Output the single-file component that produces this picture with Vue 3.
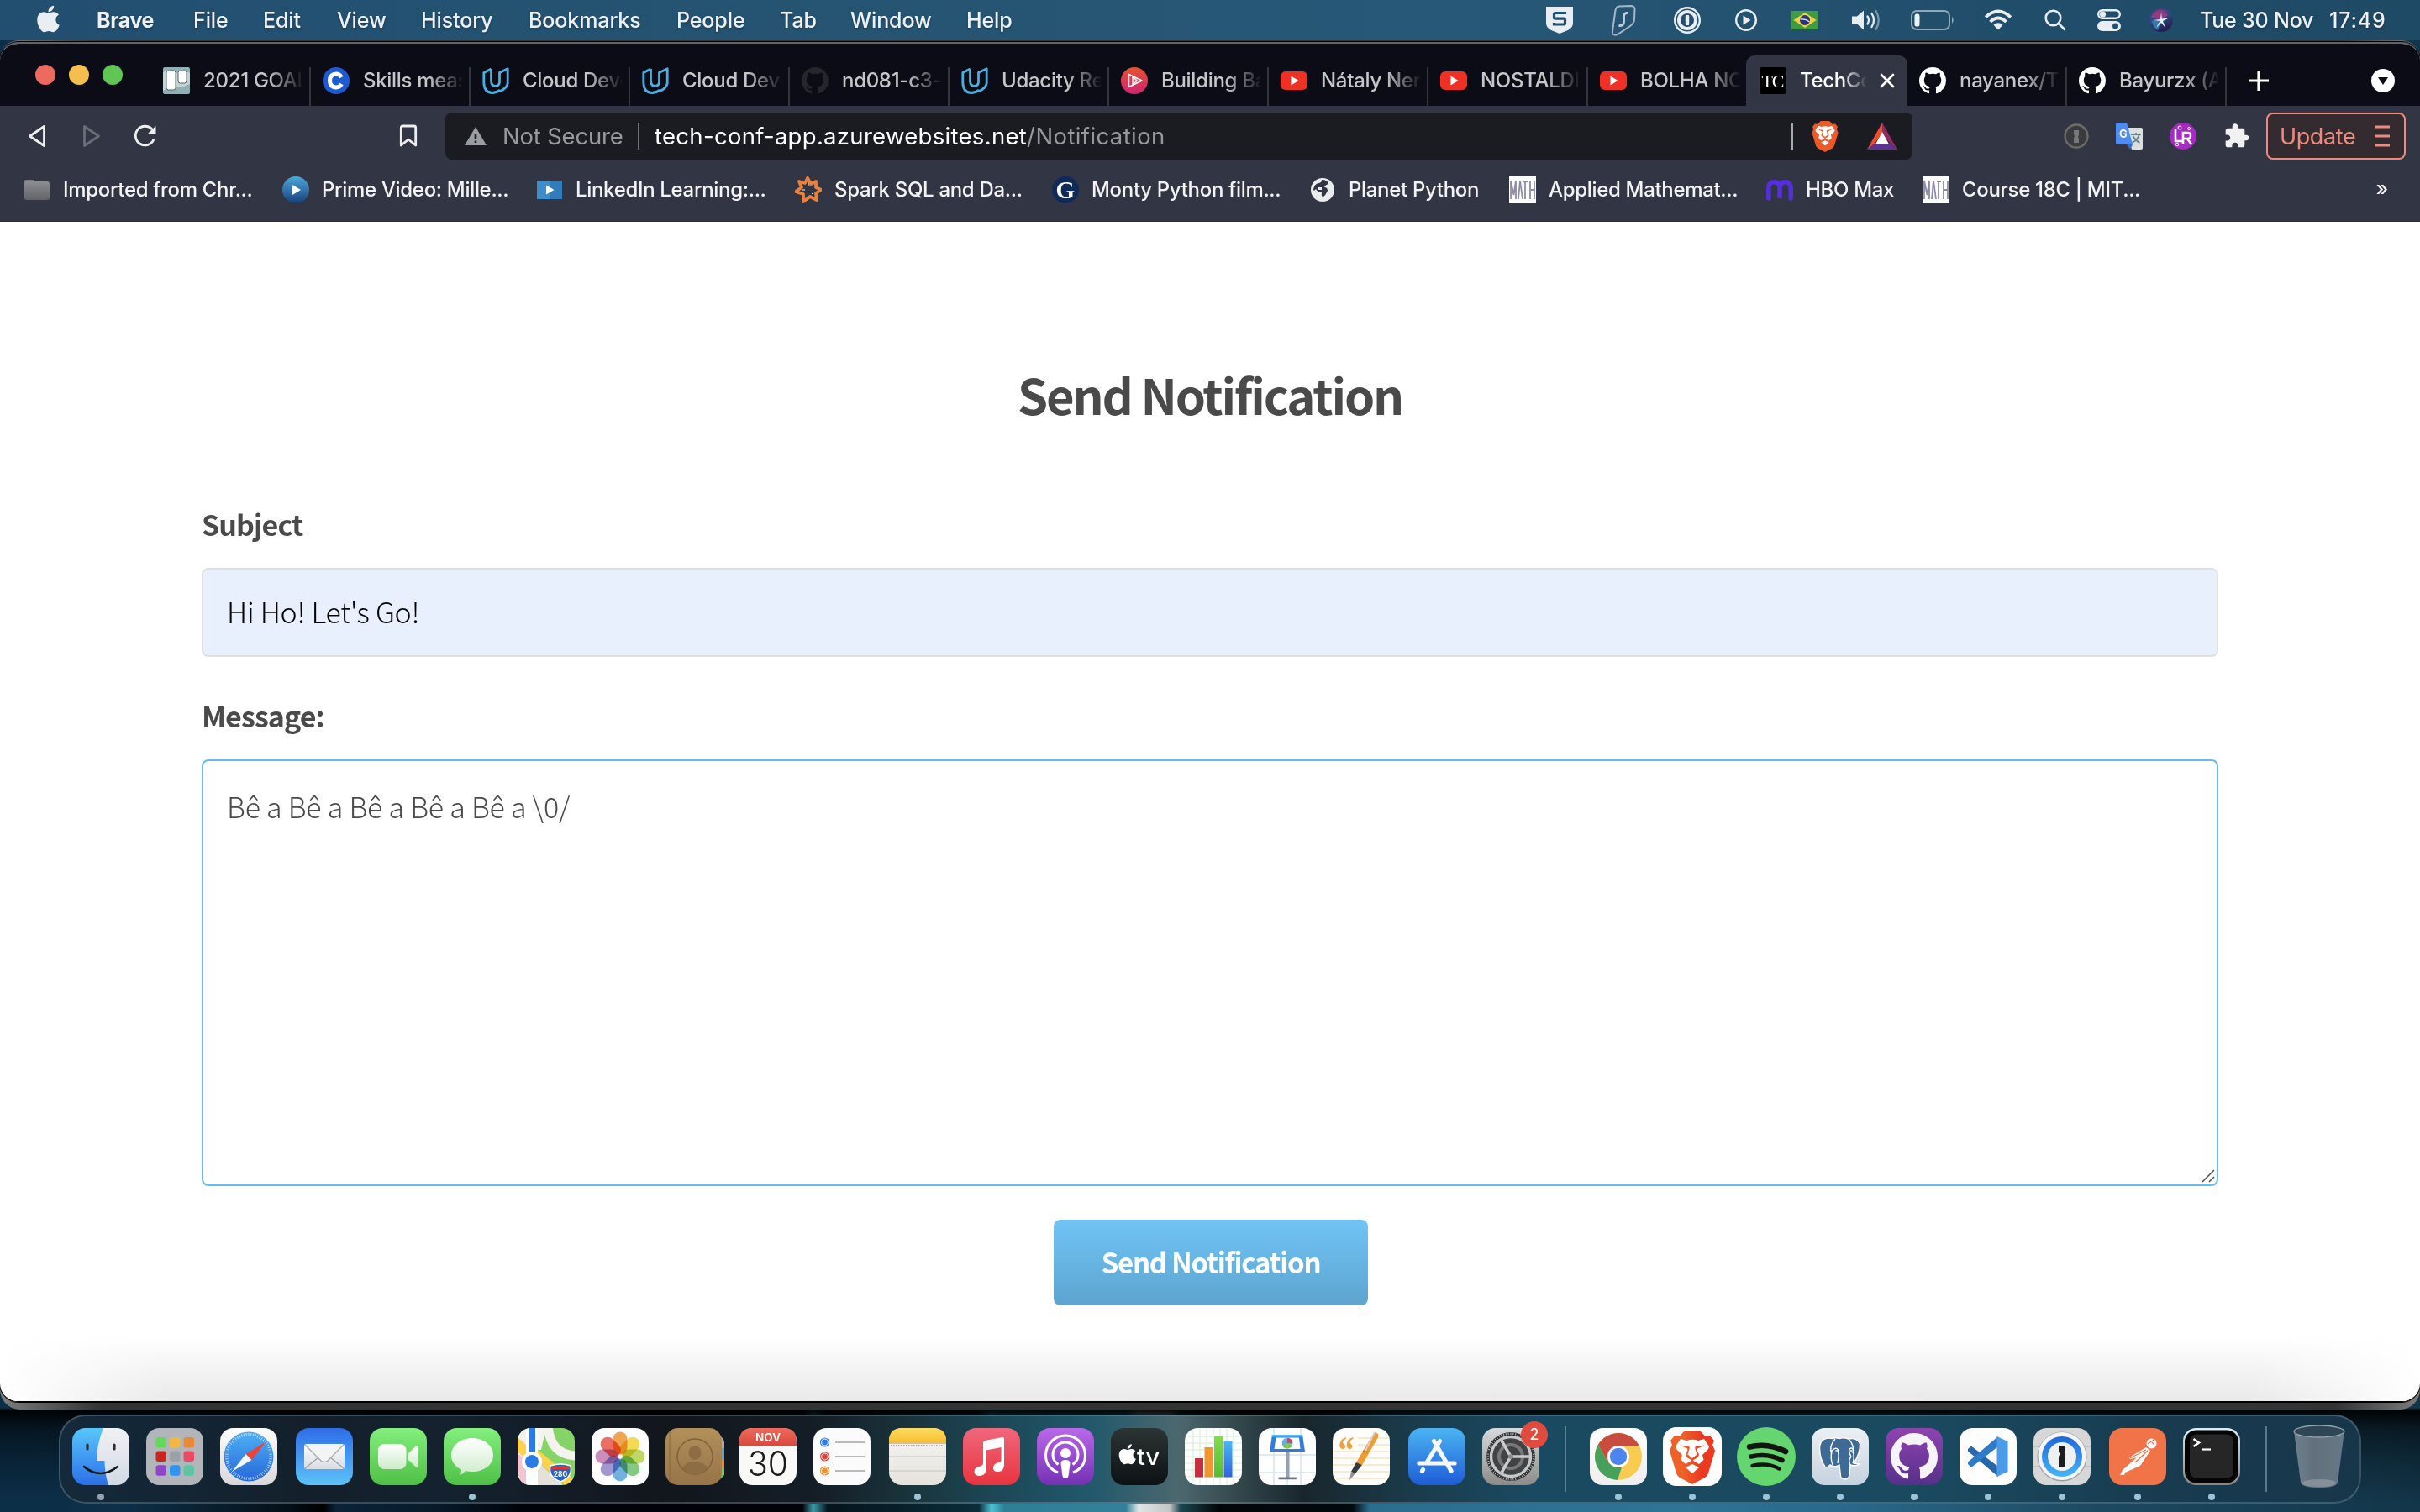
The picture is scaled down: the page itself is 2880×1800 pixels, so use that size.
<script setup>
const CAT = 'M8 0C3.58 0 0 3.58 0 8c0 3.54 2.29 6.53 5.47 7.59.4.07.55-.17.55-.38 0-.19-.01-.82-.01-1.49-2.01.37-2.53-.49-2.69-.94-.09-.23-.48-.94-.82-1.13-.28-.15-.68-.52-.01-.53.63-.01 1.08.58 1.23.82.72 1.21 1.87.87 2.33.66.07-.52.28-.87.51-1.07-1.78-.2-3.64-.89-3.64-3.95 0-.87.31-1.59.82-2.15-.08-.2-.36-1.02.08-2.12 0 0 .67-.21 2.2.82.64-.18 1.32-.27 2-.27.68 0 1.36.09 2 .27 1.53-1.04 2.2-.82 2.2-.82.44 1.1.16 1.92.08 2.12.51.56.82 1.27.82 2.15 0 3.07-1.87 3.75-3.65 3.95.29.25.54.73.54 1.48 0 1.07-.01 1.93-.01 2.2 0 .21.15.46.55.38A8.013 8.013 0 0016 8c0-4.42-3.58-8-8-8z'
const APPLE = 'M318.7 268.7c-.2-36.7 16.4-64.4 50-84.8-18.8-26.9-47.2-41.7-84.7-44.6-35.5-2.8-74.3 20.7-88.5 20.7-15 0-49.4-19.7-76.4-19.7C63.3 141.2 4 184.8 4 273.5q0 39.3 14.4 81.2c12.8 36.7 59 126.7 107.2 125.2 25.2-.6 43-17.9 75.8-17.9 31.8 0 48.3 17.9 76.4 17.9 48.6-.7 90.4-82.5 102.6-119.3-65.2-30.7-61.7-90-61.7-91.9zm-56.6-164.2c27.3-32.4 24.8-61.9 24-72.5-24.1 1.4-52 16.4-67.9 34.9-17.5 19.8-27.8 44.3-25.6 71.9 26.1 2 49.9-11.4 69.5-34.3z'
const LION = '<path d="M18 0H36L42 6.500L48 6L53 12L51 17L54 24L46 51Q45 54 42 56L27 64L12 56Q9 54 8 51L0 24L3 17L1 12L6 6L12 6.500Z"/><path fill="#fff" d="M13 10L20 12Q27 9.500 34 12L41 10L47 19L46 22L39 29L40.500 35L35 40L30 37L27 35.500L24 37L19 40L13.500 35L15 29L8 22L7 19Z"/><path d="M12 17.500L22 18.500Q24.500 19.500 23.500 22L21.500 28.500L27 33L32.500 28.500L30.500 22Q29.500 19.500 32 18.500L42 17.500L33 21.500L32.500 23L35 29L33 32.500L28.200 35V38.500H25.800V35L21 32.500L19 29L21.500 23L21 21.500Z"/><path fill="#fff" d="M27 40L35 44L27 51L19 44Z"/>'

const menus = [
  ['Brave', 115], ['File', 83], ['Edit', 88], ['View', 100], ['History', 128],
  ['Bookmarks', 176], ['People', 123], ['Tab', 84], ['Window', 138], ['Help', 60],
]

const status = [
  { gap: 0, w: 32, svg: '<path fill="#e8edf1" d="M0 0H32V19Q32 25 26 28L16 32L6 28Q0 25 0 19Z"/><path fill="none" stroke="#235070" stroke-width="3.200" d="M22.500 9V7.500H11Q9.500 7.500 9.500 9V13Q9.500 14.200 11 14.200H21Q22.500 14.200 22.500 15.800V19.500Q22.500 21 21 21H9.500V19"/>' },
  { gap: 44, w: 32, svg: '<g fill="none" stroke="#c3d0d9"><path stroke-opacity=".8" stroke-width="2" d="M6.500 5Q7.500 1 11 .5L25 0Q29.500 0 29.500 4.500L29 16Q28.500 21 24 24L9 34Q2 36 3 30Z"/><path stroke-width="2.800" d="M21.500 8.500Q16.500 8 16.500 13V19Q16.500 24 10.500 23.500"/></g>', vb: '0 -2 32 38', h: 38 },
  { gap: 44, w: 32, svg: '<circle cx="16" cy="16" r="14.800" fill="none" stroke="#e8edf1" stroke-width="2.400"/><circle cx="16" cy="16" r="12" fill="#e8edf1"/><circle cx="16" cy="16" r="8" fill="#235070"/><rect x="13.800" y="10" width="4.400" height="12" rx="1" fill="#e8edf1"/>' },
  { gap: 41, w: 26, vb: '0 0 26 26', h: 26, svg: '<circle cx="13" cy="13" r="11.800" fill="none" stroke="#e8edf1" stroke-width="2.400"/><path fill="#e8edf1" d="M9.500 7.500L18.500 13L9.500 18.500Z"/>' },
  { gap: 41, w: 32, vb: '0 0 32 22', h: 22, svg: '<rect width="32" height="22" fill="#3f9b46"/><path fill="#f6cf3c" d="M16 2L29.500 11L16 20L2.500 11Z"/><circle cx="16" cy="11" r="6" fill="#26357a"/><path d="M10.500 10Q17 9 21.500 13" fill="none" stroke="#dfe6f2" stroke-width="1.300"/>' },
  { gap: 39, w: 38, vb: '0 0 38 26', h: 26, svg: '<path fill="#e8edf1" d="M1 8.500H7L15 1.500V24.500L7 17.500H1Z"/><g fill="none" stroke="#e8edf1" stroke-width="2.300" stroke-linecap="round"><path d="M19.500 8.500Q22.500 13 19.500 17.500"/><path d="M24.500 5Q29.500 13 24.500 21"/><path stroke-opacity=".45" d="M29.500 2Q36 13 29.500 24"/></g>' },
  { gap: 33, w: 52, vb: '0 0 52 24', h: 24, svg: '<rect x="1" y="1" width="45" height="22" rx="6" fill="none" stroke="#8fa9b9" stroke-width="2"/><rect x="4.500" y="4.500" width="6" height="15" rx="2.500" fill="#eef2f5"/><path d="M49 8Q52.500 12 49 16Z" fill="#8fa9b9"/>' },
  { gap: 35, w: 34, vb: '0 0 34 26', h: 26, svg: '<g fill="none" stroke="#e8edf1" stroke-width="3.600"><path d="M2 9.500Q17-4.500 32 9.500"/><path d="M7.500 15Q17 6 26.500 15"/></g><path fill="#e8edf1" d="M11.500 18.700Q17 14 22.500 18.700L17 24.500Z"/>' },
  { gap: 38, w: 26, vb: '0 0 26 26', h: 26, svg: '<g fill="none" stroke="#e8edf1" stroke-width="2.600" stroke-linecap="round"><circle cx="10.500" cy="10.500" r="8.800"/><path d="M17 17L24 24"/></g>' },
  { gap: 37, w: 28, vb: '0 0 28 26', h: 26, svg: '<rect x="1.200" y="1.200" width="25.600" height="9.600" rx="4.800" fill="none" stroke="#e8edf1" stroke-width="2.400"/><circle cx="6.500" cy="6" r="3.600" fill="#e8edf1"/><rect y="14" width="28" height="12" rx="6" fill="#e8edf1"/><circle cx="21.500" cy="20" r="3.500" fill="#235070"/>' },
  { gap: 34, w: 28, vb: '0 0 28 28', h: 28, svg: '<defs><linearGradient id="siri" x2=".4" y2="1"><stop offset="0" stop-color="#5a3a86"/><stop offset=".5" stop-color="#2f4a86"/><stop offset="1" stop-color="#23204f"/></linearGradient></defs><circle cx="14" cy="14" r="14" fill="url(#siri)"/><path d="M2 10Q7 1 16 2L22 8L14 14Z" fill="#c2367c" opacity=".65"/><path d="M3 15L14 15L10 26Q4 23 3 15Z" fill="#3e9fd0" opacity=".6"/><path d="M14 5L15 12.500L24 11L16 15L19 23L14 17L8 23L12.500 15L4 14L13 13Z" fill="#dff6fb"/>' },
]

const YT = '<rect y="5" width="32" height="22" rx="6" fill="#ee3124"/><path fill="#fff" d="M12.500 10.500L21.500 16L12.500 21.500Z"/>'
const UD = '<g fill="none" stroke="#48b0e0" stroke-width="2.800" stroke-linejoin="round"><path d="M10.500 2L1.800 6.500V18Q2 30.500 12 30.500Q17 30.500 21 27"/><path d="M10.500 2V17Q11 22.500 15.500 22.500Q20.500 22.500 20.500 17V6.500L30.200 1.800V19Q29.500 25 21 28.500L12 30.500"/></g>'
const tabs = [
  { t: '2021 GOAL', svg: '<rect width="32" height="32" rx="2" fill="#8fb0b6"/><path d="M0 6L8 3L14 9L22 2L32 7V20L22 24L10 22L0 28Z" fill="#d5e3e2" opacity=".7"/><rect x="4" y="4" width="11" height="23" rx="2.500" fill="#fff" stroke="#555f62"/><rect x="18" y="4" width="10" height="15" rx="2.500" fill="#fff" stroke="#555f62"/>' },
  { t: 'Skills meas', svg: '<circle cx="16" cy="16" r="16" fill="#1e5bd3"/><path fill="none" stroke="#fff" stroke-width="5" d="M22.500 12Q20 8 16 8Q8.500 8.500 8.500 16Q8.500 23.500 16 24Q20 24 22.500 20"/>' },
  { t: 'Cloud Deve', svg: UD }, { t: 'Cloud Deve', svg: UD },
  { t: 'nd081-c3-', svg: `<path transform="scale(2)" fill="#26272d" d="${CAT}"/>` },
  { t: 'Udacity Rev', svg: UD },
  { t: 'Building Ba', svg: '<defs><linearGradient id="bb" x2="0" y2="1"><stop stop-color="#e5532d"/><stop offset="1" stop-color="#cf2475"/></linearGradient></defs><circle cx="16" cy="16" r="16" fill="url(#bb)"/><g fill="none" stroke="#fff" stroke-width="1.500" stroke-linejoin="round"><path d="M9.500 8.500V23.500L25 16Z"/><path d="M14 11V21L19 16Z"/></g>' },
  { t: 'Nátaly Neri', svg: YT }, { t: 'NOSTALDI', svg: YT }, { t: 'BOLHA NO', svg: YT },
  { t: 'TechCo', active: true, svg: '<rect width="32" height="32" rx="3"/><text x="16" y="24" text-anchor="middle" font-family="Liberation Serif, serif" font-size="22" textLength="27" fill="#fff">TC</text>' },
  { t: 'nayanex/Te', svg: `<path transform="scale(2)" fill="#fff" d="${CAT}"/>` },
  { t: 'Bayurzx (A', svg: `<path transform="scale(2)" fill="#fff" d="${CAT}"/>` },
]

const MATH = '<rect width="32" height="32" fill="#fff"/><g fill="none" stroke="#8d8ba8" stroke-width="1.800"><path d="M2 27V5L5.500 22L8 5V27M11 27L13 5L16 27M19 5V27M17 6H22M25 5V27M30 5V27M25 16H30"/></g>'
const bookmarks = [
  { t: 'Imported from Chr...', w: 259, svg: '<defs><linearGradient id="fo" x2="0" y2="1"><stop stop-color="#8d8e92"/><stop offset="1" stop-color="#626367"/></linearGradient></defs><path fill="#77787c" d="M1 6Q1 4 3 4H11Q13 4 13 6V8H1Z"/><rect x="1" y="6" width="30" height="22" rx="3" fill="url(#fo)"/>' },
  { t: 'Prime Video: Mille...', w: 253, svg: '<defs><linearGradient id="pv" x2="0" y2="1"><stop stop-color="#4da7dc"/><stop offset="1" stop-color="#17407a"/></linearGradient></defs><circle cx="16" cy="16" r="16" fill="url(#pv)"/><path fill="#fff" d="M12 10L22 16L12 22Z"/>' },
  { t: 'LinkedIn Learning:...', w: 259, svg: '<rect x="1" y="5" width="30" height="22" fill="#3a8fcb"/><path fill="#2b6fae" d="M16 5H31V27H16Z" opacity=".6"/><path fill="#fff" d="M12 10.500L21.500 16L12 21.500Z"/>' },
  { t: 'Spark SQL and Da...', w: 257, svg: '<path fill="none" stroke="#e8813f" stroke-width="3.800" stroke-linejoin="round" d="M15 2L19 9L25 6L25 13L31 16L25 20L26 28L18 24L10 30L10 21L1 18L8 13L5 6L12 8Z"/><path stroke="#fff" stroke-width="1" fill="none" d="M16 8V12M8 16H12M20 20L22 22"/>' },
  { t: 'Monty Python film...', w: 257, svg: '<circle cx="16" cy="16" r="16" fill="#10295b"/><text x="15.500" y="26" text-anchor="middle" font-family="Liberation Serif, serif" font-weight="700" font-size="29" fill="#fff">G</text>' },
  { t: 'Planet Python', w: 189, svg: '<circle cx="16" cy="16" r="14" fill="#eaebec"/><path fill="#323543" d="M15 4Q22 4 23 9Q19 10 18 13Q22 13 22 17Q20 22 16 25Q14 22 15 19Q10 19 8 15Q6 18 5 16Q6 9 11 8Q15 8 15 4Z"/><path fill="#eaebec" d="M10 13H15V16H10Z"/>' },
  { t: 'Applied Mathemat...', w: 257, svg: MATH },
  { t: 'HBO Max', w: 137, svg: '<path fill="none" stroke="#5330dc" stroke-width="5.500" stroke-linecap="round" d="M2.800 26V14Q3 6.800 9 6.800Q15.800 6.800 16 14V26V14Q16.200 6.800 23 6.800Q29 6.800 29.200 14V26"/>' },
  { t: 'Course 18C | MIT...', w: 260, svg: MATH },
]

const RR = 'x="0" y="0" width="68" height="68" rx="15.500"'
const lg = (id, a, b) => `<linearGradient id="${id}" x2="0" y2="1"><stop stop-color="${a}"/><stop offset="1" stop-color="${b}"/></linearGradient>`
const padColors = [['#63d95a'], ['#f3b73d'], ['#ea8a34'], ['#c5281f'], ['#9aa2a7'], ['#ea4a62'], ['#8f45c9'], ['#2f95ee'], ['#5fc4a2']]
const ticks = (n, r1, r2, c, w) => Array.from({ length: n }, (_, i) => {
  const a = (i / n) * Math.PI * 2
  return `<path stroke="${c}" stroke-width="${w}" d="M${(34 + r1 * Math.cos(a)).toFixed(2)} ${(34 + r1 * Math.sin(a)).toFixed(2)}L${(34 + r2 * Math.cos(a)).toFixed(2)} ${(34 + r2 * Math.sin(a)).toFixed(2)}"/>`
}).join('')
const petals = ['#ef9430', '#f0d338', '#b3d04a', '#6fbf6b', '#5aa3dc', '#8f86c7', '#c07ab0', '#e9564a']

const dock = [
  { run: 1, svg: `<defs>${lg('fi', '#57c7fb', '#2c6fe8')}${lg('fr', '#f1f1f4', '#d2dae5')}<clipPath id="cr"><rect ${RR}/></clipPath></defs><g clip-path="url(#cr)"><rect width="68" height="68" fill="url(#fi)"/><path d="M37 0Q29 20 29 39H38.500Q38.500 54 43 68H68V0Z" fill="url(#fr)"/></g><path d="M18 20V25M50 20V25" stroke="#2a2d33" stroke-width="3.200" stroke-linecap="round"/><path d="M14 46Q33 62 54 46" fill="none" stroke="#15181d" stroke-width="2.600" stroke-linecap="round"/>` },
  { svg: `<rect ${RR} fill="#b2b6bb"/>` + padColors.map((c, i) => `<rect x="${11.5 + (i % 3) * 16.5}" y="${11 + Math.floor(i / 3) * 16.600}" width="12.500" height="12.500" rx="3" fill="${c[0]}"/>`).join('') },
  { svg: `<defs>${lg('sa', '#4fb0f5', '#2468d8')}${lg('sw', '#ffffff', '#d9d9dc')}</defs><rect ${RR} fill="url(#sw)"/><circle cx="34" cy="34" r="29.500" fill="url(#sa)"/>${ticks(60, 24.5, 28, '#d9ecff', 0.8)}<path fill="#e8463a" d="M55 16L37.500 38L30.500 31Z"/><path fill="#f4f6f8" d="M14 52L30.500 31L37.500 38Z"/>` },
  { up: 1, svg: `<defs>${lg('ma', '#2f6ce8', '#5cc3f9')}${lg('me', '#fdfdfd', '#dadce0')}</defs><rect ${RR} fill="url(#ma)"/><rect x="10" y="19" width="48" height="30" rx="3" fill="url(#me)"/><path d="M11 48L27 35M57 48L41 35" stroke="#9aa0a8" stroke-width="1.200"/><path d="M11 20L30 39Q34 42 38 39L57 20" fill="#f4f4f5" stroke="#a5a9af" stroke-width="1.300"/>` },
  { svg: `<defs>${lg('fa', '#83ef7d', '#4fc046')}${lg('fw', '#ffffff', '#cdecc9')}</defs><rect ${RR} fill="url(#fa)"/><rect x="10" y="19" width="33.500" height="30" rx="7.500" fill="url(#fw)"/><path fill="url(#fw)" d="M46 30L55 21.500Q57.500 20 57.500 23V45Q57.500 48 55 46.500L46 38Q45 34 46 30Z"/>` },
  { run: 1, svg: `<rect ${RR} fill="url(#fa)"/><path fill="url(#fw)" d="M34 12C48 12 59 21 59 32.500C59 44 48 52 34 52Q29.500 52 26 51Q23 55 18.500 56Q21.500 53 21 49.500C14 46.500 9 40 9 32.500C9 21 20 12 34 12Z"/>` },
  { svg: `<g clip-path="url(#cr)"><rect width="68" height="68" fill="#86d468"/><path d="M0 0H10V68H0Z" fill="#f2f0ea"/><path d="M0 30L10 38V68H0Z" fill="#f3c5d0"/><path d="M24 68V40L54 68Z" fill="#e4e1d8"/><path d="M24 0H34L28 26H24Z" fill="#f5f3ee"/><path d="M0 11L10 20V37L0 28ZM24 26L68 62V68H56L24 40Z" fill="#fbd24b"/><path d="M36-4Q38 32 70 33" fill="none" stroke="#f5f3ee" stroke-width="11"/><path d="M17 0V68" stroke="#fff" stroke-width="14"/><path d="M17 0V36" stroke="#2c7be5" stroke-width="8"/></g><circle cx="17" cy="40" r="12" fill="#fff"/><circle cx="17" cy="40" r="8" fill="#2c7be5"/><path d="M39 45Q51 41 63 45Q66 58 51 64Q36 58 39 45Z" fill="#2764c4" stroke="#fff" stroke-width="1.500"/><path d="M40 47Q51 43 62 47V49H40Z" fill="#d9382e"/><text x="51" y="57.500" text-anchor="middle" font-family="Inter, sans-serif" font-weight="700" font-size="8.500" fill="#fff">280</text>` },
  { svg: `<rect ${RR} fill="#fff"/>` + petals.map((c, i) => `<rect x="25.500" y="4.500" width="17" height="27" rx="8.500" fill="${c}" opacity=".85" transform="rotate(${i * 45} 34 34)" style="mix-blend-mode:multiply"/>`).join('') },
  { svg: `<defs>${lg('co', '#b1905a', '#97744a')}</defs><path d="M55 8Q70 8 70 18V50Q70 60 60 62Z" fill="#a9acae"/><path d="M60 24H70V37H60Z" fill="#4aa9e6"/><path d="M60 37H70V48H60Z" fill="#f08b2c"/><path d="M60 48H70V56L64 62H60Z" fill="#6ccf4d"/><rect width="67" height="68" rx="15" fill="url(#co)"/><path d="M5 4V64" stroke="#86683f" stroke-width="1"/><circle cx="35" cy="34" r="21" fill="none" stroke="#7f6139" stroke-width="1.400"/><ellipse cx="35" cy="29.500" rx="7.500" ry="8.500" fill="#8d6d43"/><path d="M20 48Q24 40 35 40Q46 40 50 48Q44 55 35 55Q26 55 20 48Z" fill="#8d6d43"/>` },
  { svg: `<defs>${lg('ca', '#ef6a5c', '#d9493d')}</defs><rect ${RR} fill="#f9f9f8"/><path d="M0 21V15.500Q0 0 15.500 0H52.500Q68 0 68 15.500V21Z" fill="url(#ca)"/><text x="34" y="16" text-anchor="middle" font-family="Inter, sans-serif" font-weight="600" font-size="13.500" textLength="30" fill="#fff">NOV</text><text x="34" y="57" text-anchor="middle" font-family="Inter, sans-serif" font-weight="300" font-size="41" textLength="48" lengthAdjust="spacingAndGlyphs" fill="#1b1b1c">30</text>` },
  { svg: `<rect ${RR} fill="#fbfbfb"/>` + [['#2f7bea', 17], ['#e0453b', 34], ['#ec9333', 51]].map(([c, y]) => `<circle cx="13.500" cy="${y}" r="5" fill="none" stroke="${c}" stroke-width="1.200"/><circle cx="13.500" cy="${y}" r="3.400" fill="${c}"/><path d="M26 ${y}H61" stroke="#b9babd" stroke-width="1.800"/>`).join('') },
  { up: 1, run: 1, svg: `<defs>${lg('no', '#fcdc62', '#f7c032')}${lg('nw', '#f6f5f3', '#e6e3dc')}</defs><rect ${RR} fill="url(#nw)"/><path d="M0 17V15.500Q0 0 15.500 0H52.500Q68 0 68 15.500V17Z" fill="url(#no)"/><path d="M0 18H68" stroke="#b5b1a8" stroke-width="1.500"/><path d="M2 20.700H66" stroke="#aaa69d" stroke-width="1.500" stroke-dasharray="1.500 1.500"/><path d="M0 34H68M0 51H68" stroke="#d0cec9" stroke-width="1.300"/>` },
  { svg: `<defs>${lg('mu', '#f0677c', '#e8343f')}</defs><rect ${RR} fill="url(#mu)"/><path fill="#fff" d="M24 17.500Q24 15.500 26 15L47 11Q49 10.600 49 12.500V44Q49 51 42.500 52Q36 52.500 36 47.500Q36 43 41 41.500Q45.500 40.800 45.500 38V23L27.500 26.500V49Q27.500 56 20 57Q13.500 57 13.500 52Q13.500 47.500 18.500 46Q24 45 24 42Z"/>` },
  { svg: `<defs>${lg('po', '#bb68ea', '#7431b3')}</defs><rect ${RR} fill="url(#po)"/><g fill="none" stroke="#fff" stroke-width="3"><path d="M25 53Q10.500 47 10.500 32.500A23.500 23.500 0 0 1 57.500 32.500Q57.500 47 43 53"/><path d="M25.500 43.500Q19 39 19 32A15 15 0 0 1 49 32Q49 39 42.500 43.500"/></g><circle cx="34" cy="30" r="6" fill="#fff"/><path fill="#fff" d="M28.500 42Q28.500 38 34 38Q39.500 38 39.500 42L37.500 57Q37 60 34 60Q31 60 30.500 57Z"/>` },
  { svg: `<defs>${lg('tv', '#2b3533', '#0d1114')}</defs><rect ${RR} fill="url(#tv)"/><path transform="translate(9.500 17.500) scale(.0535)" fill="#fff" d="${APPLE}"/><text x="31" y="44" font-family="Inter, sans-serif" font-weight="500" font-size="27" textLength="27" lengthAdjust="spacingAndGlyphs" fill="#fff">tv</text>` },
  { svg: `<defs>${lg('nb', '#49b6f7', '#2f62dd')}${lg('ng', '#86dc4a', '#56bb34')}</defs><rect ${RR} fill="#fdfefd"/><path d="M10 2V66M18 0V68M26 0V68M34 0V68M42 0V68M50 0V68M58 2V66M2 10H66M0 18H68M0 26H68M0 34H68M0 42H68M0 50H68M2 58H66" stroke="#d3edd3" stroke-width="1"/><rect x="12" y="36" width="10" height="22.500" fill="#c5303f"/><rect x="23.500" y="23" width="10" height="35.500" fill="#f0962f"/><rect x="35" y="9" width="10" height="49.500" fill="url(#ng)"/><rect x="46.500" y="16" width="10" height="42.500" fill="url(#nb)"/>` },
  { svg: `<rect ${RR} fill="#fff"/><path d="M18 0V68M50 0V68M34 35V68M0 32H68M0 53H68" stroke="#d3e2f4" stroke-width="1.500" fill="none"/><rect x="32.500" y="28" width="4" height="31" fill="#93a1b5"/><rect x="23.500" y="58.500" width="21.500" height="2.800" rx="1" fill="#6f7780"/><path d="M16 8H52L55 28H13Z" fill="#2f7be0"/><path d="M16 8H52L52.500 10.500H15.500Z" fill="#58bdf5"/><path d="M20.500 11.500H48L49.500 25H18.500Z" fill="#fff"/><circle cx="34" cy="18" r="6.300" fill="#57b2ea"/><path d="M34 18V11.700A6.300 6.300 0 0 1 40.300 18Z" fill="#cf4a6a"/><path d="M34 18L28 20.500A6.300 6.300 0 0 0 40 19.500Z" fill="#7fc94b"/>` },
  { svg: `<rect ${RR} fill="#fffdf9"/><path d="M30 12H66M30 20H68M0 28H68M0 36H68M0 44H68M0 52H68M4 60H64" stroke="#f7e3c4" stroke-width="1.300"/><text x="6.500" y="42" font-family="Liberation Serif, serif" font-weight="700" font-size="46" textLength="19" lengthAdjust="spacingAndGlyphs" fill="#eea340">“</text><path d="M49 6Q51 4 54 7Q55 9 54 11L35 44L28 41Z" fill="#ef9c33"/><path d="M36 27L42 29" stroke="#b97a25" stroke-width="1.500"/><path d="M50 5L39 27" stroke="#cfd5da" stroke-width="2"/><path d="M28 41L35 44L27 54L22 52Z" fill="#333a40"/><path d="M22 52L27 54L20 62Z" fill="#8b9197"/>` },
  { up: 1, svg: `<defs>${lg('as', '#4bb4f3', '#1f5cd6')}</defs><rect ${RR} fill="url(#as)"/><g stroke="#f4f8fd" stroke-width="5.200" stroke-linecap="round"><path d="M37.500 15.500L22 41M16.500 51.500L17.500 49.500M30.500 15.500L51 51M13 42H55"/></g>` },
  { badge: '2', svg: `<defs>${lg('ss', '#d6dadd', '#8d8b88')}</defs><rect ${RR} fill="url(#ss)"/><circle cx="34" cy="34" r="29" fill="#2f3032"/>${ticks(60, 26, 28.6, '#b5b7b9', 1)}<circle cx="34" cy="34" r="23.500" fill="#424345" stroke="#c6c8ca" stroke-width="3.500"/><circle cx="34" cy="34" r="14" fill="none" stroke="#77797b" stroke-width="4"/><path d="M34 34H56M34 34L23 15M34 34L23 53" stroke="#c9cbcd" stroke-width="3.500"/><circle cx="34" cy="34" r="3" fill="#8b8d8f"/>` },
  { sep: 1 },
  { run: 1, svg: `<defs>${lg('cw', '#ffffff', '#eeeeee')}</defs><rect ${RR} fill="url(#cw)"/><circle cx="34" cy="34" r="28" fill="#f9cb50"/><path d="M9.800 20A28 28 0 0 1 58.200 20L58.500 21H34L22 41Z" fill="#c94d3e"/><path d="M9.800 20L22 41Q28 48 38 46.500L33 62A28 28 0 0 1 9.800 20Z" fill="#46a15c"/><circle cx="34" cy="34" r="13" fill="#fff"/><circle cx="34" cy="34" r="10.200" fill="#4c86ec"/>` },
  { run: 1, svg: `<rect x="-1" y="-1" width="70" height="70" rx="16" fill="#fff"/><defs><linearGradient id="br" gradientUnits="userSpaceOnUse" x1="0" x2="54" y1="0" y2="0"><stop offset=".3" stop-color="#ee6129"/><stop offset=".7" stop-color="#ea3a22"/></linearGradient></defs><g transform="translate(7 3)" fill="url(#br)">${LION}</g>` },
  { run: 1, svg: `<circle cx="34" cy="34" r="35" fill="#64d56f"/><g fill="none" stroke="#101512" stroke-linecap="round"><path stroke-width="6.500" d="M14 22.500Q36 17 57 28"/><path stroke-width="5.500" d="M16 34Q36 29.500 53 38.500"/><path stroke-width="4.500" d="M17.500 45Q35 41 49.500 48.500"/></g>` },
  { run: 1, svg: `<defs>${lg('pg', '#ecf0f5', '#c6d2df')}</defs><rect ${RR} fill="url(#pg)"/><path fill="#3f6a95" stroke="#fff" stroke-width="1.400" d="M25 12.500Q10 10 9.500 24Q10 38 16 46Q19 48 22 44L24 45Q28 47 33 44L34.500 57Q35 61 39 61Q45 61 45 55L46 44Q52 46 57 43L50 42Q58 30 57.500 19Q54 11 44 13Q38 11 33 12.500Q28 11 25 12.500Z"/><path fill="none" stroke="#fff" stroke-width="1.400" d="M25 44Q22 36 24 27Q29 22 31.500 26Q33 34 31 42M46 44Q43 39 47 34Q44 29 45 25Q49 22 49.500 28Q51 36 49 42M28 13Q20 22 24 31M44 13Q51 20 49 30"/><path d="M28.500 27H31M46 27H48" stroke="#fff" stroke-width="1.500"/>` },
  { run: 1, svg: `<defs>${lg('gh', '#8f43b0', '#56308a')}</defs><rect ${RR} fill="url(#gh)"/><path transform="translate(6 6) scale(3.500)" fill="#f6f3f9" d="${CAT}"/>` },
  { run: 1, svg: `<rect ${RR} fill="#fefefe"/><path fill="#2766ab" d="M10 25L14 21.500L46 46V58L10 27.500Z"/><path fill="#2f7bc8" d="M10 43L14 47L46 22V10L10 40.500Z"/><path fill="#4a9ce9" d="M44.500 10L57.500 16V52L44.500 58Z"/>` },
  { run: 1, svg: `<defs>${lg('op', '#2068d8', '#45b5f7')}</defs><rect ${RR} fill="#d7d7d8"/><path d="M0 22H68M0 46H68" stroke="#bcbcbe" stroke-width="1.500"/><circle cx="34" cy="34" r="29.500" fill="#9d9fa2"/><circle cx="34" cy="33.500" r="28.500" fill="#f4f5f6"/><circle cx="34" cy="34" r="24" fill="url(#op)"/><circle cx="34" cy="34" r="17" fill="#eff0f2"/><path fill="#1c1d20" d="M30 21H38V34L37 36V38L38 40V47H30V34L31 32V30L30 28Z"/>` },
  { up: 1, run: 1, svg: `<rect ${RR} fill="#f07448"/><circle cx="50.500" cy="18.500" r="6" fill="#fff"/><path d="M46 19L53 14M51 17L54 20" stroke="#f07448" stroke-width="1.200"/><path fill="#fff" d="M44 23L49 27L37 45L19 53L18 56H13L16 50L33 35L25 37L24 35Z"/><path d="M25 36L44 26M31 41L46 27" stroke="#f07448" stroke-width="1.300"/>` },
  { run: 1, svg: `<defs>${lg('te', '#d9eef6', '#8a8380')}</defs><rect ${RR} fill="url(#te)"/><rect x="2" y="2.500" width="64" height="63" rx="14" fill="#050505"/><rect x="8" y="7.500" width="52" height="52" rx="8" fill="#262626"/><path d="M12.500 13L19 17.500L12.500 22" fill="none" stroke="#fff" stroke-width="2.600"/><path d="M23 25.500H33" stroke="#fff" stroke-width="2.200"/>` },
  { sep: 1 },
  { svg: `<defs><linearGradient id="tr"><stop stop-color="#8a98a2" stop-opacity=".75"/><stop offset=".4" stop-color="#6b7681" stop-opacity=".9"/><stop offset="1" stop-color="#7f8f9a" stop-opacity=".75"/></linearGradient></defs><path fill="url(#tr)" d="M4 3.500L12 65Q14 71 34 71Q54 71 56 65L64 3.500Z"/><ellipse cx="34" cy="4" rx="30" ry="7" fill="#2f4656" stroke="#94a3ad" stroke-width="1.300"/><ellipse cx="34" cy="65.500" rx="20" ry="4.500" fill="#aab3ba" opacity=".45"/>` },
]
</script>

<template>
  <div class="desktop">
    <header class="menubar">
      <svg class="apple" viewBox="0 28 384 456"><path :d="APPLE" /></svg>
      <nav class="menus">
        <span v-for="(m, i) in menus" :key="m[0]" :class="{ app: i === 0 }" :style="{ width: m[1] + 'px' }">{{ m[0] }}</span>
      </nav>
      <div class="status">
        <svg v-for="(s, i) in status" :key="i" :width="s.w" :height="s.h || 32" :viewBox="s.vb || '0 0 32 32'" :style="{ marginLeft: s.gap + 'px' }" v-html="s.svg" />
        <span class="date">Tue 30 Nov</span>
        <span class="time">17:49</span>
      </div>
    </header>

    <div class="back">
      <main class="window">
        <div class="tabstrip">
          <div class="lights"><i class="r" /><i class="y" /><i class="g" /></div>
          <div v-for="(t, i) in tabs" :key="i" class="tab" :class="{ active: t.active, nosep: i === 9 }">
            <svg viewBox="0 0 32 32" v-html="t.svg" />
            <span class="tt">{{ t.t }}</span>
            <svg v-if="t.active" class="close" viewBox="0 0 18 18"><path d="M2 2L16 16M16 2L2 16" /></svg>
          </div>
          <svg class="plus" viewBox="0 0 24 24"><path d="M12 0V24M0 12H24" /></svg>
          <svg class="down" viewBox="0 0 28 28"><circle cx="14" cy="14" r="14" fill="#fff" /><path d="M8 10H20L14 19Z" fill="#0c0c16" /></svg>
        </div>

        <div class="toolbar">
          <svg class="back-i" viewBox="0 0 22 28"><path d="M19.500 2.500V25.500L2.500 14Z" /></svg>
          <svg class="fwd-i" viewBox="0 0 22 28"><path d="M2.500 2.500V25.500L19.500 14Z" /></svg>
          <svg class="rel-i" viewBox="0 0 28 28"><path d="M24 18A11.300 11.300 0 1 1 22 6" /><path class="f" d="M26.500 2V12H17.500Q17 10 19 9L23 5Z" /></svg>
          <svg class="bm-i" viewBox="0 0 22 28"><path d="M2.300 25V4Q2.300 2 4.300 2H17.700Q19.700 2 19.700 4V25L11 18Z" /></svg>
          <div class="omnibox">
            <svg class="warn" viewBox="0 0 26 22"><path fill="#9a9ea3" d="M13 0L26 22H0Z" /><path stroke="#1b1c21" stroke-width="2.600" d="M13 8V14.500M13 16.500V19" /></svg>
            <span class="ns">Not Secure</span>
            <i class="bar" />
            <span class="host">tech-conf-app.azurewebsites.net</span><span class="path">/Notification</span>
            <i class="bar light" />
            <svg class="lion" viewBox="0 0 54 64"><g fill="#ec5a2a" v-html="LION" /></svg>
            <svg class="bat" viewBox="0 0 36 32"><path fill="#ee4e2b" d="M18 0V12L9 25L0 32Z" /><path fill="#8f2a63" d="M18 0L36 32L27 25L18 12Z" /><path fill="#5e3392" d="M0 32L9 25H27L36 32Z" /><path fill="#fff" d="M18 11L26 25.500H10Z" /></svg>
          </div>
          <div class="exts">
            <svg width="30" height="30" viewBox="0 0 30 30"><circle cx="15" cy="15" r="13.500" fill="#3a3b3f" stroke="#6b6c68" stroke-width="2.400" /><path fill="#77787a" d="M12 8H18V14L17 16L18 18V23H12V17L13 15L12 13Z" /></svg>
            <svg width="32" height="32" viewBox="0 0 32 32"><path fill="#dcdfe0" d="M12 6H30Q32 6 32 8V30Q32 32 30 32H19Z" /><path fill="none" stroke="#68858f" stroke-width="1.800" d="M18 14H30M24 12V14M28 14Q26 21 19 24M20.500 16Q23 21 28.500 24" /><path fill="#4f8bf0" d="M2 0H13L20 26H2Q0 26 0 24V2Q0 0 2 0Z" /><path fill="#3769c9" d="M13 26H20L17 32Z" /><text x="4" y="18" font-family="Inter, sans-serif" font-weight="700" font-size="13" fill="#fff">G</text></svg>
            <svg width="32" height="32" viewBox="0 0 32 32"><circle cx="16" cy="16" r="16" fill="#a52bc4" /><g fill="none" stroke="#fff"><path stroke-width="2.600" d="M7 7V22H16M16 26V12H22Q25 12 25 15.500Q25 19 22 19H17M21 19L26 26" /><circle cx="12" cy="6" r="2" /><circle cx="23" cy="7" r="1.500" /><circle cx="9" cy="26" r="1.800" /></g></svg>
            <svg width="32" height="32" viewBox="0 0 24 24"><path fill="#f1f1f2" d="M20.500 11H19V7c0-1.100-.9-2-2-2h-4V3.500C13 2.120 11.880 1 10.500 1S8 2.120 8 3.500V5H4c-1.100 0-1.990.9-1.990 2v3.800H3.500c1.490 0 2.700 1.210 2.700 2.700s-1.210 2.700-2.700 2.700H2V20c0 1.100.9 2 2 2h3.800v-1.500c0-1.490 1.210-2.700 2.700-2.700 1.490 0 2.700 1.210 2.700 2.700V22H17c1.100 0 2-.9 2-2v-4h1.500c1.380 0 2.500-1.120 2.500-2.500S21.880 11 20.500 11z" /></svg>
          </div>
          <button class="update"><span>Update</span><svg viewBox="0 0 18 26"><path d="M0 2H18M0 13H18M0 24H18" /></svg></button>
        </div>

        <div class="bookmarks">
          <div v-for="(b, i) in bookmarks" :key="i" class="bm" :style="{ width: b.w + 'px' }">
            <svg viewBox="0 0 32 32" v-html="b.svg" /><span>{{ b.t }}</span>
          </div>
          <span class="more">»</span>
        </div>

        <section class="page">
          <h1>Send Notification</h1>
          <label>Subject</label>
          <div class="field">Hi Ho! Let's Go!</div>
          <label class="l2">Message:</label>
          <div class="area">Bê a Bê a Bê a Bê a Bê a \0/<svg viewBox="0 0 16 16"><path d="M1 15L15 1M9 15L15 9" /></svg></div>
          <button class="send">Send Notification</button>
        </section>
      </main>
    </div>

    <footer class="dock">
      <template v-for="(d, i) in dock" :key="i">
        <i v-if="d.sep" class="dsep" />
        <div v-else class="app-icon" :class="{ wide: d.up }">
          <svg viewBox="0 0 68 68" v-html="d.svg" />
          <b v-if="d.badge">{{ d.badge }}</b>
          <i v-if="d.run" class="dot" />
        </div>
      </template>
    </footer>
  </div>
</template>

<style>
html, body { margin: 0; overflow: hidden; background: #000; }
</style>

<style scoped>
.desktop {
  width: 2880px; height: 1800px; overflow: hidden; display: flex; flex-direction: column;
  font-family: Inter, "Liberation Sans", sans-serif; box-sizing: border-box;
  background:
    linear-gradient(180deg, transparent 1676px, rgba(0,0,0,.95) 1679px, rgba(0,0,0,.55) 1700px, rgba(0,0,0,.25) 1740px, transparent 1790px),
    linear-gradient(90deg, #0c2f49 0, #0d2f47 150px, #041019 340px, #000 385px, #0a2337 400px, #071a2a 520px, #01030a 620px, #020308 955px, #3d9aa8 968px, #04141b 985px, #0b2c3a 1165px, #4ec3d2 1180px, #2f7f97 1195px, #34809b 1340px, #dfe6e6 1355px, #c5c5c5 1392px, #1c4650 1405px, #020608 1450px, #020a0f 1610px, #2b6d8d 1630px, #2f7395 2000px, #29688a 2200px, #1d4960 2500px, #123549 2880px);
}
.menubar {
  height: 48px; flex: none; display: flex; align-items: center; color: #edf1f4; font-size: 25px; font-weight: 500;
  background: linear-gradient(90deg, #224f70, #265573 40%, #275877 60%, #214e6b 80%, #1f4a66);
  text-shadow: 0 2px 3px rgba(0,0,0,.25);
}
.apple { width: 27px; height: 33px; margin: 0 0 4px 44px; fill: #e9eef2; }
.menus { display: flex; margin-left: 44px; width: 1725px; white-space: nowrap; letter-spacing: -.1px; }
.menus .app { font-weight: 700; letter-spacing: -.35px; }
.status { display: flex; align-items: center; white-space: nowrap; }
.status svg { flex: none; overflow: visible; }
.date { margin-left: 32px; width: 154px; letter-spacing: -.2px; }
.time { letter-spacing: .8px; }

.back { flex: none; height: 1630px; box-sizing: border-box; padding-bottom: 9px; background: linear-gradient(90deg, #7d7d7d, #333 120px, #333 2780px, #7d7d7d); border-radius: 22px 22px 24px 24px; }
.window {
  box-sizing: border-box; border: 2px solid #60626a; border-width: 2px 0 1px; border-color: #62646a #000 #000; outline: 1px solid #000;
  border-radius: 22px; overflow: hidden; background: #fff; display: flex; flex-direction: column; margin-top: 2px; height: 1619px;
}
.tabstrip { height: 74px; flex: none; background: #0c0c16; display: flex; align-items: flex-end; }
.lights { display: flex; gap: 16px; padding-left: 42px; width: 138px; height: 49px; }
.lights i { width: 24px; height: 24px; border-radius: 50%; flex: none; }
.lights .r { background: #ed6a5e; }
.lights .y { background: #f5bf4f; }
.lights .g { background: #61c554; }
.tab { width: 190px; box-sizing: border-box; height: 46px; border-right: 2px solid #34353a; display: flex; padding-left: 14px; flex: none; color: #c6c6c8; font-size: 24px; font-weight: 500; }
.tab svg { width: 32px; height: 32px; flex: none; }
.tt { margin-left: 16px; line-height: 31px; width: 118px; overflow: hidden; white-space: nowrap; letter-spacing: -.3px; -webkit-mask-image: linear-gradient(90deg, #000 66%, transparent 102%); mask-image: linear-gradient(90deg, #000 66%, transparent 102%); }
.tab.nosep { border-color: transparent; width: 188px; }
.tab.active { width: 192px; height: 60px; background: #323543; border: 0; border-radius: 10px 10px 0 0; padding: 14px 0 0 16px; color: #fff; }
.tab.active .tt { width: 80px; -webkit-mask-image: linear-gradient(90deg, #000 62%, transparent 100%); mask-image: linear-gradient(90deg, #000 62%, transparent 100%); }
.tab.active .close { width: 18px; height: 18px; margin: 7px 0 0 15px; fill: none; stroke: #fff; stroke-width: 2.600; stroke-linecap: round; }
.plus { width: 24px; height: 24px; margin: 0 0 18px 26px; stroke: #fff; stroke-width: 3.200; }
.down { width: 28px; height: 28px; margin: 0 0 16px auto; padding-right: 30px; }

.toolbar { height: 72px; flex: none; background: #323543; display: flex; align-items: center; }
.toolbar > svg { flex: none; width: 22px; height: 28px; fill: none; stroke: #eee; stroke-width: 2.800; stroke-linejoin: round; }
.back-i { margin-left: 33px; }
.toolbar > .fwd-i { margin-left: 43px; stroke: #6b6d77; }
.toolbar > .rel-i { margin-left: 39px; width: 28px; }
.rel-i .f { fill: #eee; stroke: none; }
.toolbar > .bm-i { margin-left: 288px; }
.omnibox { margin-left: 33px; width: 1746px; height: 56px; border-radius: 8px; background: #1b1c21; display: flex; align-items: center; font-size: 27.500px; white-space: nowrap; flex: none; }
.warn { width: 26px; height: 22px; margin-left: 23px; }
.ns { margin-left: 19px; width: 161px; color: #96999e; letter-spacing: -.2px; }
.bar { width: 2px; height: 32px; background: #6e7074; }
.host { margin-left: 18px; color: #fff; letter-spacing: .3px; }
.path { color: #97989b; letter-spacing: .4px; }
.bar.light { margin-left: auto; background: #a9a9ab; }
.lion { width: 32px; height: 37px; margin-left: 22px; }
.bat { width: 36px; height: 32px; margin: 0 18px 0 34px; }
.exts { display: flex; align-items: center; margin-left: 180px; gap: 32px; }
.exts svg { flex: none; }
.update { margin-left: 19px; width: 166px; height: 56px; box-sizing: border-box; border: 2px solid #ee8b7e; border-radius: 8px; background: #332b30; color: #ee8b7e; font: 400 27px Inter, sans-serif; padding: 0 17px 0 14px; display: flex; justify-content: space-between; align-items: center; letter-spacing: -.4px; }
.update svg { width: 18px; height: 26px; stroke: #ee8b7e; stroke-width: 3; }

.bookmarks { height: 66px; flex: none; background: #323543; display: flex; align-items: center; padding: 0 0 10px 28px; box-sizing: border-box; color: #f3f3f4; font-size: 24px; font-weight: 500; border-bottom: 1px solid #2a2c38; }
.bm { display: flex; align-items: center; flex: none; margin-right: 49px; white-space: nowrap; letter-spacing: -.32px; }
.bm svg { width: 32px; height: 32px; flex: none; margin-right: 15px; }
.more { margin: 0 38px 2px auto; }

.page { flex: 1; display: flex; flex-direction: column; padding: 173px 240px 0; font-family: "Noto Sans CJK JP", "Noto Sans CJK SC", sans-serif; color: #4a4a4a; background: linear-gradient(90deg, #fff 0, rgba(255,255,255,0) 200px, rgba(255,255,255,0) 2680px, #fff), linear-gradient(180deg, #fff 1325px, #e9e9e9 1404px); }
h1 { margin: 0; text-align: center; font-size: 58px; font-weight: 700; line-height: 64px; letter-spacing: -2.200px; }
label { margin-top: 99px; font-size: 34px; line-height: 48px; font-weight: 700; letter-spacing: -.9px; }
.field { margin-top: 28px; height: 106px; box-sizing: border-box; border: 2px solid #e0e0e0; border-radius: 8px; background: #e8f0fe; padding: 0 28px; line-height: 99px; font-size: 34px; font-weight: 300; color: #000; letter-spacing: -.25px; }
.l2 { margin-top: 46px; }
.area { margin-top: 28px; height: 508px; box-sizing: border-box; border: 2px solid #64bbf0; border-radius: 8px; padding: 29px 28px; line-height: 50px; font-size: 34px; font-weight: 300; letter-spacing: -.2px; position: relative; }
.area svg { position: absolute; right: 2px; bottom: 2px; width: 16px; height: 16px; stroke: #555; stroke-width: 1.600; }
.send { margin: 40px 1012px 0 1014px; width: 374px; height: 102px; border: 0; border-radius: 8px; background: linear-gradient(180deg, #70c4f5, #5da4cf); color: #fff; font-family: inherit; font-size: 33px; font-weight: 700; letter-spacing: -1.250px; padding: 0 0 2px; }

.dock { margin: 6px 0 0 70px; width: 2740px; height: 106px; box-sizing: border-box; border: 2px solid rgba(160,190,200,.28); border-radius: 32px; display: flex; align-items: flex-start; padding: 14px 0 0 14px; gap: 20px; flex: none;
  background: linear-gradient(90deg, #14293b 0, #13202b 300px, #13222f 460px, #12161d 720px, #141e27 900px, #193239 1000px, #1c4958 1120px, #22596b 1230px, #4c686e 1330px, #33484d 1400px, #18262c 1480px, #1a3d4d 1620px, #1a4a61 1750px, #1a4a60 2200px, #183b4f 2500px, #17364a); }
.app-icon { width: 68px; height: 68px; position: relative; flex: none; }
.app-icon svg { width: 68px; height: 68px; overflow: visible; display: block; }
.app-icon.wide { margin-left: 2px; }
.dot { position: absolute; left: 30px; top: 78px; width: 8px; height: 8px; border-radius: 50%; background: #9cc3d6; }
.app-icon:first-child .dot { background: #93a2b0; }
.app-icon b { position: absolute; left: 46px; top: -8px; width: 32px; height: 32px; border-radius: 50%; background: #e04b3f; color: #fff; font-size: 18px; font-weight: 400; line-height: 32px; text-align: center; }
.dsep { width: 2px; height: 78px; margin: -2px 8px 0 10px; background: rgba(150,185,205,.5); flex: none; }
</style>
